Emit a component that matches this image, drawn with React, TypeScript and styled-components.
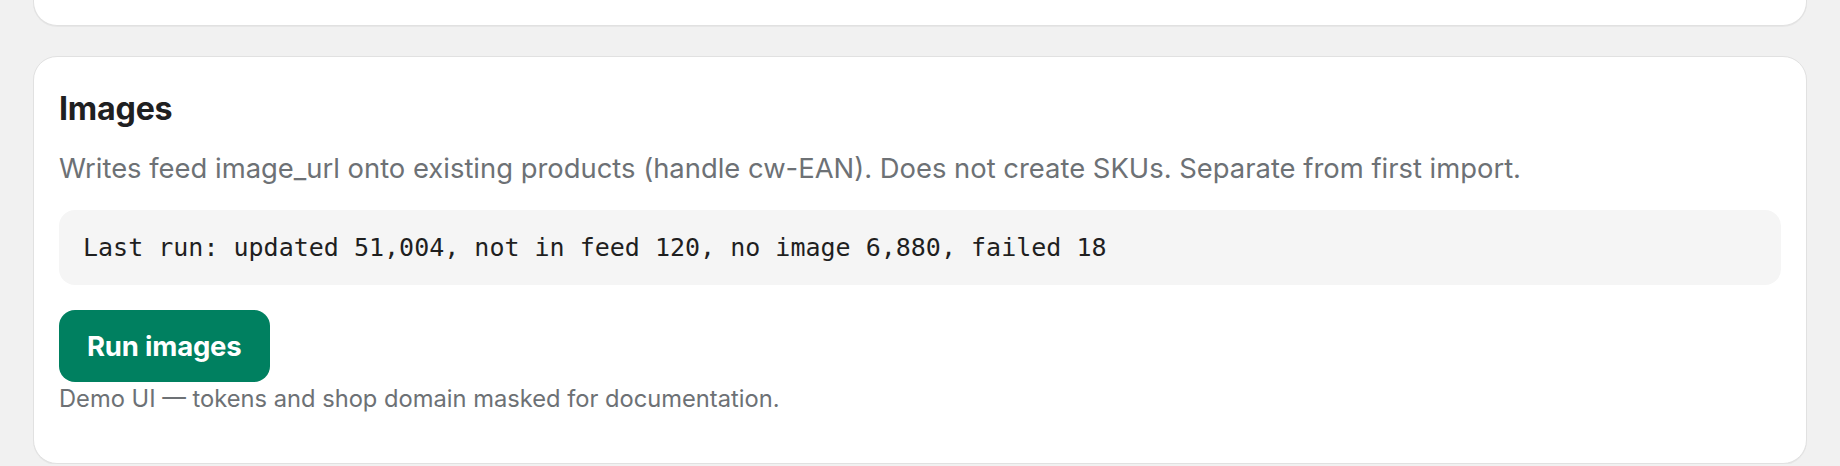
import React from "react";
import styled, { createGlobalStyle } from "styled-components";

const GlobalStyle = createGlobalStyle`
  html, body {
    margin: 0;
    padding: 0;
    background: #f1f1f1;
  }
  body {
    font-family: Inter, "Noto Sans", "Liberation Sans", sans-serif;
    -webkit-font-smoothing: antialiased;
  }
  * { box-sizing: border-box; }
`;

const Page = styled.div`
  display: flex;
  flex-direction: column;
  gap: 30px;
  padding: 0 33px;
`;

const Card = styled.section<{ $clipped?: boolean }>`
  background: #ffffff;
  border: 1px solid #e1e1e1;
  border-radius: ${(p) => (p.$clipped ? "0 0 24px 24px" : "24px")};
  ${(p) => (p.$clipped ? "border-top: none;" : "")}
  box-shadow: 0 1px 0 rgba(0, 0, 0, 0.04);
`;

const ClippedCard = styled(Card)`
  height: 26px;
`;

const Body = styled.div`
  display: flex;
  flex-direction: column;
  padding: 32px 25px 48px;
`;

const Title = styled.h2`
  margin: 0;
  font-size: 32.2px;
  line-height: 40px;
  font-weight: 700;
  color: #1f2021;
  letter-spacing: -0.2px;
`;

const Description = styled.p`
  margin: 19px 0 0;
  font-size: 27.4px;
  line-height: 40px;
  color: #6d7175;
`;

const CodeBox = styled.pre`
  margin: 22px 0 0;
  padding: 0 24px;
  height: 75px;
  display: flex;
  align-items: center;
  background: #f5f5f5;
  border-radius: 16px;
  font-family: "DejaVu Sans Mono", "Liberation Mono", monospace;
  font-size: 25px;
  color: #1f1f1f;
`;

const Button = styled.button`
  margin-top: 25px;
  align-self: flex-start;
  height: 72px;
  padding: 0 28px;
  border: none;
  border-radius: 16px;
  background: #008060;
  color: #ffffff;
  font-family: Inter, "Noto Sans", sans-serif;
  font-size: 27.5px;
  font-weight: 700;
  letter-spacing: -0.2px;
  cursor: pointer;
`;

const Note = styled.p`
  margin: 1px 0 0;
  font-size: 23.7px;
  line-height: 32px;
  color: #6d7175;
`;

export default function App() {
  return (
    <>
      <GlobalStyle />
      <Page>
        <ClippedCard $clipped />
        <Card>
          <Body>
            <Title>Images</Title>
            <Description>
              Writes feed image_url onto existing products (handle cw-EAN). Does not create SKUs. Separate from first import.
            </Description>
            <CodeBox>Last run: updated 51,004, not in feed 120, no image 6,880, failed 18</CodeBox>
            <Button>Run images</Button>
            <Note>Demo UI — tokens and shop domain masked for documentation.</Note>
          </Body>
        </Card>
      </Page>
    </>
  );
}
